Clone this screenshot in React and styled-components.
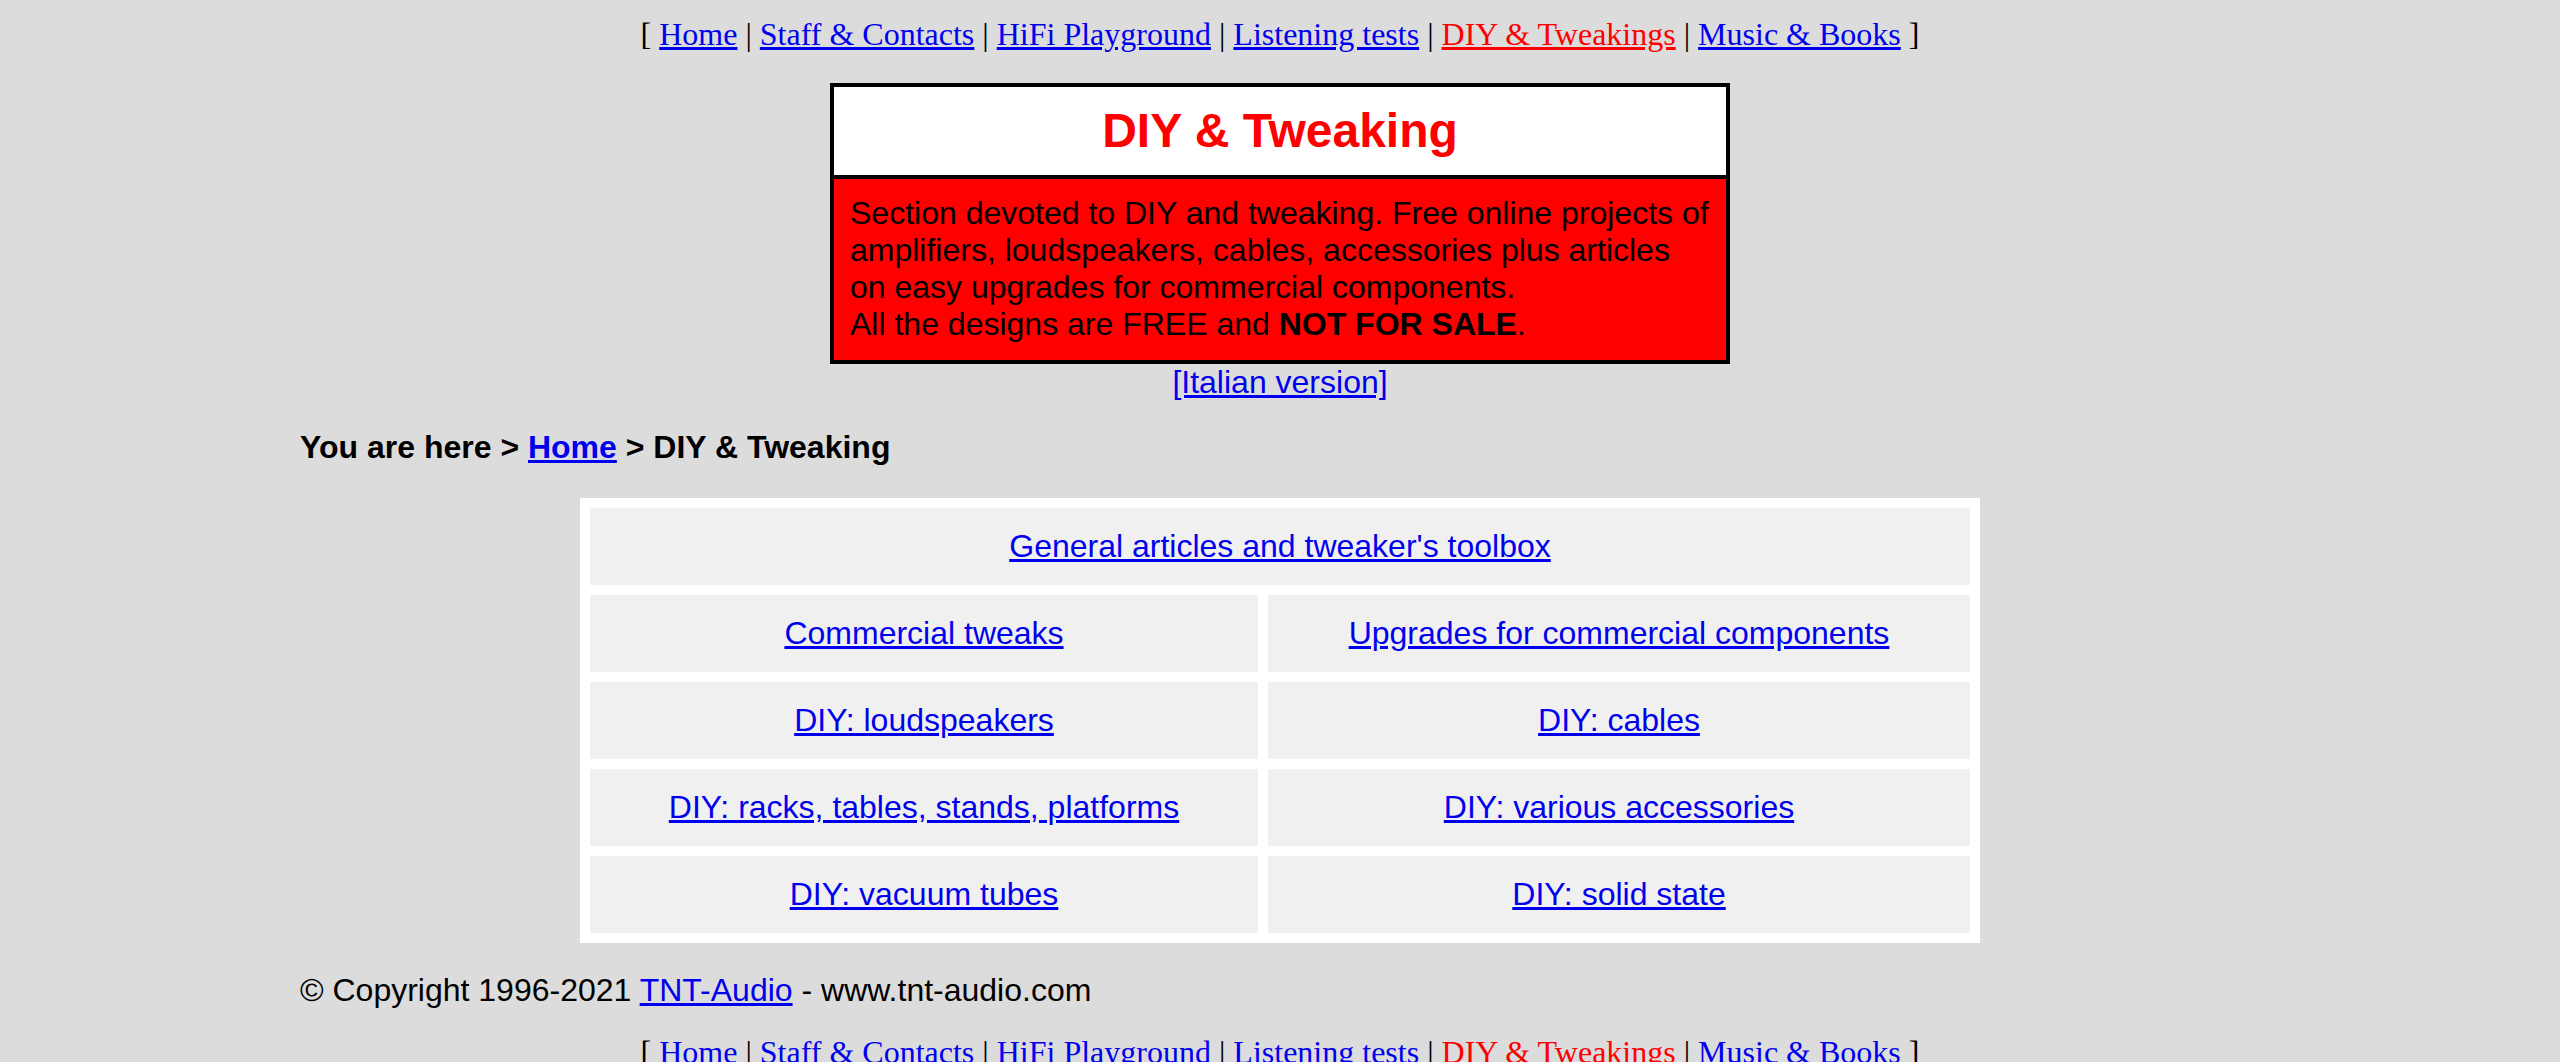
import styled, { createGlobalStyle } from 'styled-components'

const GlobalStyle = createGlobalStyle`
  body {
    margin: 0;
    background: #dcdcdc;
    font-family: "Liberation Sans", Arial, sans-serif;
    color: #000;
  }
  a {
    color: #0000ee;
  }
`

const navItems = [
  { label: 'Home' },
  { label: 'Staff & Contacts' },
  { label: 'HiFi Playground' },
  { label: 'Listening tests' },
  { label: 'DIY & Tweakings', current: true },
  { label: 'Music & Books' }
]

const sections = [
  { label: "General articles and tweaker's toolbox", wide: true },
  { label: 'Commercial tweaks' },
  { label: 'Upgrades for commercial components' },
  { label: 'DIY: loudspeakers' },
  { label: 'DIY: cables' },
  { label: 'DIY: racks, tables, stands, platforms' },
  { label: 'DIY: various accessories' },
  { label: 'DIY: vacuum tubes' },
  { label: 'DIY: solid state' }
]

function TopNav({ top }) {
  return (
    <Nav $top={top}>
      [{' '}
      {navItems.map((item, idx) => (
        <span key={idx}>
          <NavLink href="#" $current={item.current}>{item.label}</NavLink>
          {idx < navItems.length - 1 ? ' | ' : ' '}
        </span>
      ))}
      ]
    </Nav>
  )
}

export default function App() {
  return (
    <Page>
      <GlobalStyle />
      <TopNav top={16} />

      <TitleBox>
        <TitleCell>
          <h2>DIY &amp; Tweaking</h2>
        </TitleCell>
        <DescCell>
          Section devoted to DIY and tweaking. Free online projects of<br />
          amplifiers, loudspeakers, cables, accessories plus articles<br />
          on easy upgrades for commercial components.<br />
          All the designs are FREE and <b>NOT FOR SALE</b>.
        </DescCell>
      </TitleBox>
      <Italian><a href="#">[Italian version]</a></Italian>

      <Content>
        <Crumbs>
          You are here &gt; <a href="#">Home</a> &gt; DIY &amp; Tweaking
        </Crumbs>

        <Panel>
          {sections.map((s, idx) => (
            <Cell key={idx} $wide={s.wide}>
              <a href="#">{s.label}</a>
            </Cell>
          ))}
        </Panel>

        <Copyright>
          © Copyright 1996-2021 <a href="#">TNT-Audio</a> - www.tnt-audio.com
        </Copyright>
      </Content>

      <TopNav top={25} />
    </Page>
  )
}

const Page = styled.div`
  padding-bottom: 20px;
`

const Nav = styled.p`
  margin: ${props => props.$top}px 0 0;
  text-align: center;
  font-family: "Liberation Serif", "Times New Roman", serif;
  font-size: 32px;
  line-height: 37px;
  white-space: nowrap;
`

const NavLink = styled.a`
  color: ${props => (props.$current ? '#ff0000' : '#0000ee')};
`

const TitleBox = styled.div`
  width: 900px;
  margin: 30px auto 0;
  border: 4px solid #000;
  box-sizing: border-box;
`

const TitleCell = styled.div`
  background: #fff;
  padding: 16px 16px 17px;
  text-align: center;
  h2 {
    margin: 0;
    font-size: 48px;
    line-height: 55px;
    font-weight: bold;
    color: #ff0000;
  }
`

const DescCell = styled.div`
  background: #ff0000;
  border-top: 4px solid #000;
  padding: 16px 16px 17px;
  font-size: 32px;
  line-height: 37px;
  white-space: nowrap;
`

const Italian = styled.div`
  text-align: center;
  font-size: 32px;
  line-height: 37px;
`

const Content = styled.div`
  width: 1960px;
  margin: 0 auto;
`

const Crumbs = styled.div`
  margin-top: 28px;
  font-size: 32px;
  line-height: 37px;
  font-weight: bold;
`

const Panel = styled.div`
  width: 1400px;
  box-sizing: border-box;
  margin: 32px auto 0;
  padding: 10px;
  background: #fff;
  display: grid;
  grid-template-columns: 668px 1fr;
  gap: 10px;
`

const Cell = styled.div`
  grid-column: ${props => (props.$wide ? '1 / -1' : 'auto')};
  background: #f0f0f0;
  height: 77px;
  display: flex;
  align-items: center;
  justify-content: center;
  font-size: 32px;
  line-height: 37px;
  text-align: center;
`

const Copyright = styled.div`
  margin-top: 29px;
  font-size: 32px;
  line-height: 37px;
`
